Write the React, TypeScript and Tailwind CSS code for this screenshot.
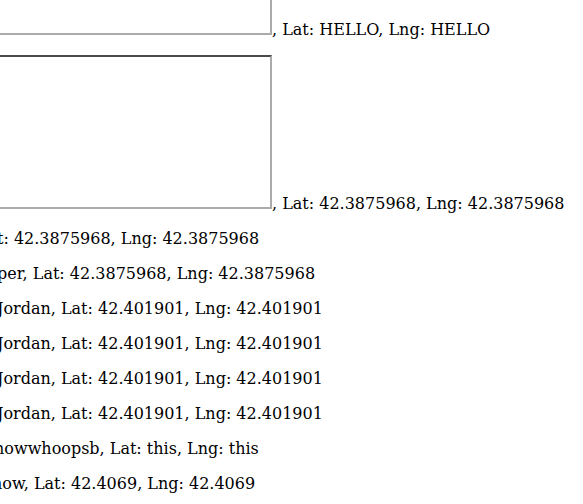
const frameRows = [
  { label: ", Lat: HELLO, Lng: HELLO" },
  { label: ", Lat: 42.3875968, Lng: 42.3875968" },
]

const textRows = [
  { text: "t: 42.3875968, Lng: 42.3875968", cls: "-ml-[3px]" },
  { text: "per, Lat: 42.3875968, Lng: 42.3875968", cls: "-ml-[3px]" },
  { text: "Jordan, Lat: 42.401901, Lng: 42.401901", cls: "-ml-[3px]" },
  { text: "Jordan, Lat: 42.401901, Lng: 42.401901", cls: "-ml-[3px]" },
  { text: "Jordan, Lat: 42.401901, Lng: 42.401901", cls: "-ml-[3px]" },
  { text: "Jordan, Lat: 42.401901, Lng: 42.401901", cls: "-ml-[3px]" },
  { text: "howwhoopsb, Lat: this, Lng: this", cls: "-ml-[6px]" },
  { text: "how, Lat: 42.4069, Lng: 42.4069", cls: "-ml-[8px]" },
]

function Frame() {
  return (
    <div className="inline-block h-[154px] w-[304px] border-2 border-t-[#4a4a4a] border-l-[#4a4a4a] border-r-[#ababab] border-b-[#ababab] bg-white align-baseline" />
  )
}

export default function App() {
  return (
    <div className="h-[504px] overflow-hidden bg-white font-['DejaVu_Serif',serif] text-[16px] leading-[19px] text-black">
      <div className="-mt-[119px] flex flex-col gap-4">
        {frameRows.map((row, i) => (
          <p key={i} className="-ml-8 whitespace-nowrap">
            <Frame />
            {row.label}
          </p>
        ))}
        {textRows.map((row, i) => (
          <p key={i} className={"whitespace-nowrap " + row.cls}>
            {row.text}
          </p>
        ))}
      </div>
    </div>
  )
}
